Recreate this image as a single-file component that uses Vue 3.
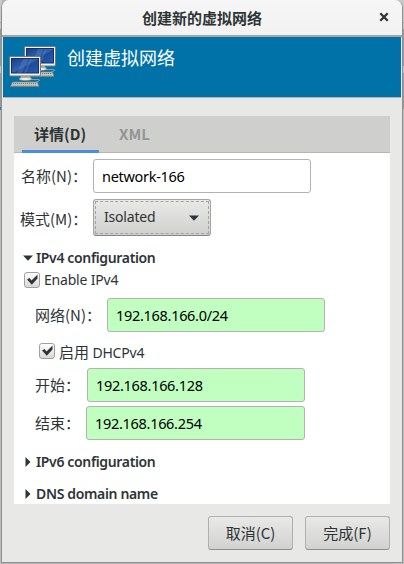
<script setup>
import { ref } from 'vue'

const name = ref('network-166')
const network = ref('192.168.166.0/24')
const start = ref('192.168.166.128')
const end = ref('192.168.166.254')
</script>

<template>
  <div class="desktop">
    <div class="dialog">
      <header class="titlebar">
        <span class="title">创建新的虚拟网络</span>
        <svg class="close" viewBox="0 0 10 10"><path d="M1.3 1.3 8.7 8.7M8.7 1.3 1.3 8.7" /></svg>
      </header>

      <div class="banner">
        <svg class="computers" viewBox="0 0 48 44">
          <defs>
            <linearGradient id="screen" x1="0" y1="0" x2="1" y2="1">
              <stop offset="0" stop-color="#123f8c" />
              <stop offset=".5" stop-color="#3563ac" />
              <stop offset=".55" stop-color="#1e4a98" />
              <stop offset="1" stop-color="#2a5bad" />
            </linearGradient>
            <g id="pc">
              <path d="M12 20h9l1 3h-11z" fill="#c9c9c4" />
              <ellipse cx="16.500" cy="23" rx="6.500" ry="1.500" fill="#eeeeea" stroke="#8b8c87" stroke-width=".6" />
              <path d="M22 23.500h7q3 .2 1 1.500l-4 1.500" fill="none" stroke="#8fa3a8" stroke-width=".9" />
              <rect x=".5" y=".5" width="31" height="19.500" rx="1.200" fill="#f0f0ec" stroke="#777973" />
              <rect x="2.500" y="2.500" width="27" height="14.500" fill="url(#screen)" stroke="#10316d" />
              <path d="M14 3h5l-6 14H8zM21 3h2l-6 14h-2z" fill="#7298d1" opacity=".25" />
              <path d="M3.500 26h25l1.500 4.500H1.500z" fill="#d9d9d3" stroke="#777973" stroke-width=".8" />
              <path d="M4 27.500h24M3.500 29.200h25" stroke="#777973" stroke-width="1" stroke-dasharray="1.300 .7" />
            </g>
          </defs>
          <use href="#pc" x="15" y="0" />
          <use href="#pc" x="0" y="10" />
        </svg>
        <span class="heading">创建虚拟网络</span>
      </div>

      <main class="notebook">
        <nav class="tabs">
          <span class="tab active">详情(D)</span>
          <span class="tab xml">XML</span>
        </nav>
        <div class="page">
          <div class="row name-row">
            <label class="cjk">名称(N)：</label>
            <div class="entry white"><span>{{ name }}</span></div>
          </div>
          <div class="row mode-row">
            <label class="cjk">模式(M)：</label>
            <div class="combo">
              <span class="latin">Isolated</span>
              <svg class="arrow" viewBox="0 0 10 6"><path d="M0 .5h10L5 5.800z" /></svg>
            </div>
          </div>
          <div class="row expander ipv4">
            <svg class="down" viewBox="0 0 10 6"><path d="M0 .5h10L5 5.800z" /></svg>
            <span>IPv4 configuration</span>
          </div>
          <div class="row check-row enable">
            <span class="check"><svg viewBox="0 0 14 14"><path d="M2 6.500 4.500 5 6.500 7.500 12.500 1.500V5.500L6.800 11.800z" /></svg></span>
            <span class="latin">Enable IPv4</span>
          </div>
          <div class="row net-row">
            <label class="cjk">网络(N)：</label>
            <div class="entry"><span>{{ network }}</span></div>
          </div>
          <div class="row check-row dhcp">
            <span class="check"><svg viewBox="0 0 14 14"><path d="M2 6.500 4.500 5 6.500 7.500 12.500 1.500V5.500L6.800 11.800z" /></svg></span>
            <span class="cjk">启用 <span class="latin">DHCPv4</span></span>
          </div>
          <div class="row start-row">
            <label class="cjk">开始：</label>
            <div class="entry"><span>{{ start }}</span></div>
          </div>
          <div class="row end-row">
            <label class="cjk">结束：</label>
            <div class="entry end"><span>{{ end }}</span></div>
          </div>
          <div class="row expander ipv6">
            <svg class="right" viewBox="0 0 6 10"><path d="M.5 0v10L5.500 5z" /></svg>
            <span>IPv6 configuration</span>
          </div>
          <div class="row expander dns">
            <svg class="right" viewBox="0 0 6 10"><path d="M.5 0v10L5.500 5z" /></svg>
            <span>DNS domain name</span>
          </div>
        </div>
      </main>

      <footer class="actions">
        <button class="button">取消(C)</button>
        <button class="button">完成(F)</button>
      </footer>
    </div>
  </div>
</template>

<style>
body {
  margin: 0;
  overflow: hidden;
}
</style>

<style scoped>
* {
  box-sizing: border-box;
}
.desktop {
  width: 404px;
  height: 564px;
  padding: 0 1px 1px 1px;
  background:
    linear-gradient(#c9c9c9 0 22px, #aaa 22px 23px, #c4c4c4 23px 29px, #999 29px 66px, #c6c6c6 66px 73px, #999 73px 107px, #4577ad 107px 110px, #bcbcbc 110px) left / 2px 100% no-repeat,
    linear-gradient(#c9c9c9 0 22px, #aaa 22px 23px, #c4c4c4 23px 29px, #999 29px 66px, #c6c6c6 66px 73px, #999 73px 109px, #bcbcbc 109px) right / 10px 100% no-repeat,
    #b5b5b5;
  color: #2e3436;
  font: 14.5px/20px "Noto Sans", "Noto Sans CJK SC", sans-serif;
  letter-spacing: -.3px;
  white-space: nowrap;
}
.dialog {
  display: flex;
  flex-direction: column;
  width: 402px;
  height: 563px;
  border: 1px solid #8f918f;
  border-top: 0;
  border-radius: 8px 8px 0 0;
  background: #e8e8e6;
  overflow: hidden;
}
.titlebar {
  display: flex;
  flex: none;
  align-items: center;
  height: 37px;
  padding-left: 140px;
  background: linear-gradient(#f6f6f6, #f2f2f2);
  border-bottom: 2px solid #a5a5a1;
}
.title {
  font: bold 15px/20px "Noto Sans CJK SC", sans-serif;
  letter-spacing: 0;
}
.close {
  width: 10px;
  height: 10px;
  margin: -2px 0 0 117px;
}
.close path {
  fill: none;
  stroke: #2e3436;
  stroke-width: 2.3;
}
.banner {
  display: flex;
  flex: none;
  height: 61px;
  padding: 9px 0 0 6px;
  margin: 0 1px;
  background: #0072a8;
  border-bottom: 1px solid #b1b5b1;
}
.computers {
  width: 48px;
  height: 44px;
}
.heading {
  margin: -1px 0 0 10px;
  color: #fff;
  font: 18px/24px "Noto Sans CJK SC", sans-serif;
  letter-spacing: 0;
}
.notebook {
  flex: none;
  height: 388px;
  margin: 18px 12px 0 12px;
  background: #fff;
  overflow: hidden;
}
.tabs {
  display: flex;
  height: 37px;
  padding: 0 8px;
  background: #cfcfcd;
  border-bottom: 1px solid #b6b6b3;
}
.tab {
  height: 37px;
  font: bold 15px/36px "Noto Sans CJK SC", sans-serif;
  letter-spacing: 0;
}
.tab.active {
  width: 77px;
  padding-left: 12px;
  border-bottom: 3px solid #4a90d9;
}
.tab.xml {
  padding-left: 20px;
  color: #929595;
  font: 600 15px/35px "Noto Sans CJK SC", sans-serif;
}
.row {
  display: flex;
  align-items: center;
}
.cjk {
  font: 15px/20px "Noto Sans CJK SC", sans-serif;
  letter-spacing: 0;
}
.latin {
  font: 14px/20px "Noto Sans", sans-serif;
  letter-spacing: -.2px;
}
.name-row {
  height: 34px;
  margin-top: 6px;
}
.name-row label,
.mode-row label {
  width: 79px;
  padding-left: 7px;
}
.mode-row label {
  padding: 2px 0 0 6px;
}
.mode-row {
  height: 37px;
  margin-top: 6px;
}
.entry {
  width: 218px;
  height: 34px;
  padding-left: 8px;
  border: 1px solid #b3b3af;
  border-radius: 3px;
  background: #c1ffc1;
  color: #000;
  line-height: 33px;
}
.entry.white {
  background: #fff;
}
.entry.end {
  width: 219px;
}
.combo {
  display: flex;
  align-items: center;
  width: 118px;
  height: 37px;
  padding: 0 11px 2px 10px;
  border: 1px solid #a4a4a0;
  border-bottom-color: #848480;
  border-radius: 3px;
  outline: 1px dashed #a2a2a0;
  outline-offset: -3px;
  background: linear-gradient(#e9e9e7, #d0d0ce);
}
.arrow {
  width: 10px;
  height: 6px;
  margin: 3px 0 0 auto;
}
svg.arrow,
.down,
.right {
  fill: #2e3436;
}
.down {
  width: 10px;
  height: 6px;
  margin-right: 3px;
}
.right {
  width: 6px;
  height: 10px;
  margin-right: 5px;
}
.expander {
  height: 20px;
  font-weight: 600;
  font-size: 14px;
  letter-spacing: -.35px;
}
.ipv4 {
  margin-top: 12px;
  padding-left: 9px;
}
.check-row {
  height: 20px;
}
.enable {
  margin-top: 2px;
  padding-left: 10px;
}
.enable .latin {
  margin-top: -1px;
}
.check {
  width: 16px;
  height: 16px;
  margin-right: 4px;
  border: 1px solid #a0a09c;
  border-radius: 3px;
  background: linear-gradient(#fff, #d8d8d6);
}
.check svg {
  display: block;
  width: 14px;
  height: 14px;
  fill: #2e3436;
}
.net-row {
  height: 34px;
  margin-top: 8px;
  padding-left: 21px;
}
.net-row label {
  width: 72px;
}
.dhcp {
  margin-top: 9px;
  padding-left: 25px;
}
.dhcp .cjk {
  margin-top: 2px;
}
.start-row {
  height: 34px;
  margin-top: 7px;
  padding-left: 21px;
}
.start-row label {
  width: 52px;
}
.end-row {
  height: 34px;
  margin-top: 4px;
  padding-left: 21px;
}
.end-row label {
  width: 51px;
}
.ipv6 {
  margin-top: 12px;
  padding-left: 11px;
}
.dns {
  margin-top: 12px;
  padding-left: 11px;
}
.actions {
  display: flex;
  justify-content: flex-end;
  gap: 12px;
  padding: 12px 12px 0 0;
}
.button {
  width: 85px;
  height: 34px;
  padding: 0;
  border: 1px solid #b0b0ac;
  border-bottom-color: #8d8d89;
  border-radius: 3px;
  background: linear-gradient(#e9e9e7, #d2d2d0);
  color: #2e3436;
  font: 15px/20px "Noto Sans CJK SC", sans-serif;
}
</style>
